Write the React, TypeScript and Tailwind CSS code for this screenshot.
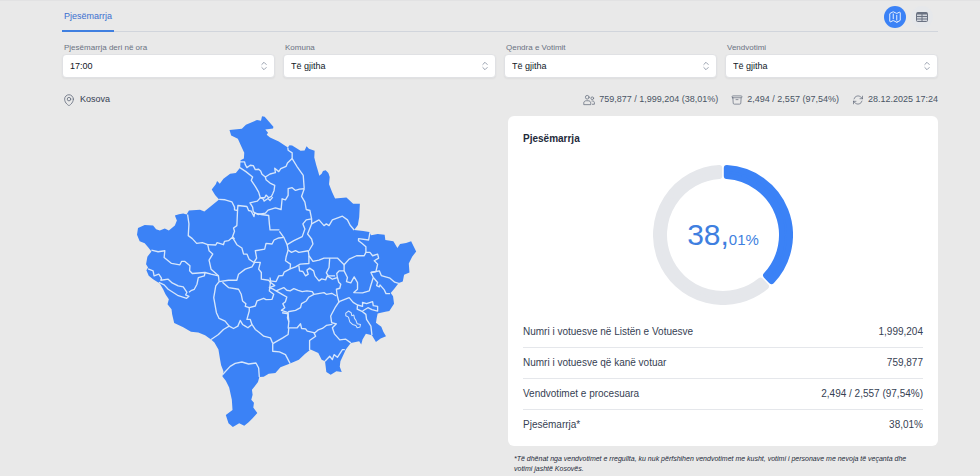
import { useState } from "react";
import type { ReactNode } from "react";
import clsx from "clsx";
import {
  HiOutlineArchiveBox,
  HiOutlineArrowPath,
  HiOutlineMap,
  HiOutlineMapPin,
} from "react-icons/hi2";

const OUTLINE =
  "303,60 340,56 352,44 385,30 397,32 400,19 408,20 434,50 433,55 410,58 418,68 414,74 424,82 450,94 477,112 482,105 490,106 515,122 527,121 533,108 540,116 557,122 556,142 562,165 568,185 571,196 578,190 582,182 590,180 598,188 602,200 600,222 609,245 618,264 652,261 672,280 692,280 690,320 686,343 675,358 702,361 720,364 726,374 745,370 766,372 768,388 792,392 804,412 812,400 830,397 845,392 860,422 848,438 838,458 840,485 824,492 820,512 808,516 796,532 784,546 791,556 794,578 780,600 768,602 745,607 742,622 740,635 756,647 762,662 770,675 754,682 740,692 728,672 710,668 700,685 696,700 690,690 665,695 650,715 644,728 634,750 632,766 638,782 622,780 605,790 592,782 588,750 578,745 568,725 545,715 528,728 510,745 482,757 455,768 440,785 420,787 405,796 392,797 388,812 370,835 372,850 368,865 376,874 374,888 386,904 372,920 360,932 347,942 332,935 313,946 300,935 292,910 312,895 310,865 302,828 292,808 282,795 285,780 278,762 275,745 270,715 258,694 248,685 230,672 210,664 188,662 165,648 138,636 132,610 130,595 118,580 122,565 112,550 105,535 95,518 75,505 62,495 55,478 60,470 54,460 58,438 70,422 62,412 50,398 35,392 27,372 30,352 50,343 75,345 84,356 95,360 110,354 122,360 140,345 146,330 140,315 152,311 165,309 175,312 182,300 215,298 228,303 250,285 272,267 260,254 250,237 262,222 266,212 274,220 285,205 305,190 322,188 335,172 336,150 346,145 347,128 338,108 328,86 308,76";

const BORDERS = [
  "334,155 348,155 350,163 355,172 365,165 374,166 380,178 390,177 396,182 400,192 410,200 424,191 440,187 438,174 450,184 456,175 472,168 476,158 490,145",
  "477,112 478,120 490,128 490,145 504,168 523,195 526,235",
  "334,172 352,184 372,200 368,210 380,228 390,245 395,262 408,262 412,254 420,262 428,258 432,250 436,240 438,225 424,218 412,208 410,200",
  "396,262 404,266 406,272 418,264 424,270 432,260",
  "272,267 290,268 310,274 318,290 318,298 327,300 325,345 315,352 318,362 312,378 318,385",
  "327,300 328,285 355,288 360,300 368,302 376,318 378,308 398,312 420,315 422,340 424,358 452,358",
  "395,262 386,272 364,277 372,290 374,304 388,312 410,308 418,299 440,292 457,297 460,265 470,268 478,255 478,235 490,232 500,240 512,236 526,235",
  "526,235 518,258 528,275 532,297 543,300 548,325 548,340 536,370 548,385 552,400 540,420",
  "548,340 570,328 585,345 592,340 600,345 610,328 640,317 655,328 663,344 675,358",
  "548,325 532,328 522,340 528,355 520,378 495,390 475,402 465,380 452,362",
  "475,402 478,418 488,425 500,420 510,425 538,420 540,435 552,452 570,448 585,442 602,442 625,442 645,462 660,445 682,435 705,435 710,425 710,408 698,398 688,390 688,384 718,388 722,366",
  "478,418 472,438 470,450 485,460 484,474 500,468 514,460 540,458 540,435",
  "484,474 466,484 462,494 450,495 442,512 424,510",
  "510,465 512,480 522,482 530,495 538,490 534,478 542,472 554,480 558,495 570,510 578,504 590,507 595,495 610,505 625,500 623,488 630,480 645,480 645,462",
  "602,442 600,470 592,486 598,495 618,495",
  "625,500 629,514 635,520 632,532 622,535 624,552 630,575",
  "645,480 655,500 652,512 665,516 675,498 685,515 685,535 674,545 700,546 720,540 724,526 732,500 725,485 740,482 745,460 735,450 748,442 745,430 730,435 722,425 710,425",
  "725,485 750,480 756,494 782,502 796,514 810,518",
  "732,500 745,515 742,524 750,528 752,522 765,537 770,548 782,548",
  "442,540 465,530 474,538 484,540 495,533 508,538 520,542 534,540 550,542 555,550 585,545 592,550 608,547 622,555",
  "442,540 460,550 474,558 470,572 462,578 468,590 458,598 478,605 476,620 480,632",
  "478,602 500,598 515,590 518,578 532,570 540,558 555,550",
  "630,572 618,590 610,605 605,615 608,636",
  "630,572 645,566 660,560 672,574 685,582 684,594 700,602 710,610 712,625 725,645 728,672",
  "685,582 700,586 700,574 712,578 730,572 732,584 745,586 745,600 728,596 716,590 700,600",
  "608,635 622,638 610,650 616,668 632,686 650,684 665,695",
  "610,640 592,643 580,652 568,656 558,665 535,660 530,653 518,652 515,638 505,650 480,650 478,670 462,680 432,697",
  "555,665 560,675 542,688 542,717",
  "588,750 602,735 610,745 615,730 625,738 640,715 647,715",
  "460,605 478,608 480,632 478,652",
  "432,697 432,720 452,722 470,730 484,757",
  "432,697 425,680 405,675 392,664 380,655 370,640 358,650 350,645 342,640 335,628 328,645 315,652 302,645 285,655 270,670 248,685",
  "302,645 290,630 272,622 264,605 256,560 262,525 272,512",
  "370,640 365,625 355,625 362,600 362,590",
  "282,790 305,765 320,756 340,752 360,758 382,755 390,770 392,797",
  "178,312 182,340 180,375 192,384 205,398 222,396 238,402 242,420 253,430 242,448 248,475 260,486 270,495 272,512",
  "238,402 262,403 266,396 285,402 288,392 300,390 312,380 325,402 340,412 345,430 355,430 362,446 376,455",
  "70,418 90,423 110,420 108,440 130,458 155,462 160,452 170,452 185,465 184,480 192,488 230,485 248,490 270,495",
  "230,485 228,495 210,500 206,520 198,535 190,538 182,544",
  "60,474 75,480 78,495 92,490 100,502 98,508 120,505 132,516 150,525 165,528 176,544 172,552 182,556 175,562 148,553 120,535 108,522 92,514",
  "272,512 300,508 325,508 330,490 350,475 370,468 378,455 395,455 390,475 398,485 398,505 420,508 425,515",
  "282,514 300,530 330,535 338,550 342,570 352,578 350,586 362,590 380,585 385,570 405,562 412,566 430,565 435,550 422,540 425,515",
  "376,455 384,442 380,420 408,415 412,398 430,400 436,388 450,382 465,380",
  "424,500 426,515 438,524 422,530 432,534 442,540",
];

const ENCLAVE =
  "650,606 658,600 666,605 668,614 674,612 676,622 680,627 684,638 694,640 692,648 684,650 680,643 670,640 662,632 658,618 650,614";

const FILTERS = [
  { id: "hour", label: "Pjesëmarrja deri në ora", value: "17:00" },
  { id: "municipality", label: "Komuna", value: "Të gjitha" },
  { id: "center", label: "Qendra e Votimit", value: "Të gjitha" },
  { id: "station", label: "Vendvotimi", value: "Të gjitha" },
];

const ROWS = [
  ["Numri i votuesve në Listën e Votuesve", "1,999,204"],
  ["Numri i votuesve që kanë votuar", "759,877"],
  ["Vendvotimet e procesuara", "2,494 / 2,557 (97,54%)"],
  ["Pjesëmarrja*", "38,01%"],
];

function UsersIcon() {
  return (
    <svg
      viewBox="0 0 24 24"
      className="size-3 fill-none stroke-gray-500"
      strokeWidth="1.6"
      strokeLinecap="round"
      strokeLinejoin="round"
    >
      <circle cx="8.5" cy="6.5" r="3.7" />
      <path d="M1.5 20.5v-2.2c0-3 2.200-4.800 5-4.800h4c2.800 0 5 1.800 5 4.800v2.200z" />
      <circle cx="18.500" cy="8.500" r="2.700" />
      <path d="M18 14h1.200c2.200 0 3.600 1.500 3.600 3.600v2.900h-4" />
    </svg>
  );
}

function TableIcon() {
  return (
    <svg viewBox="0 0 14 14" className="size-3.5 fill-none stroke-gray-500">
      <rect x="1.500" y="2.500" width="11" height="9" rx="1" className="fill-gray-300" />
      <path d="M2 3.500h10" strokeWidth="2" />
      <path d="M1.500 6.500h11M1.500 9h11M7 3v8.500" />
    </svg>
  );
}

function Filter({ id, label, value }: { id: string; label: string; value: string }) {
  return (
    <div className="flex flex-col gap-px">
      <label htmlFor={id} className="px-0.5 text-[8px] leading-[10px] text-gray-500">
        {label}
      </label>
      <div className="relative">
        <select
          id={id}
          className="block h-6 w-full appearance-none rounded border border-[#e0e1e4] bg-white pt-px pr-6 pl-[7px] text-[9px] text-gray-900 shadow-xs"
        >
          <option>{value}</option>
        </select>
        <svg
          viewBox="0 0 8 10"
          className="pointer-events-none absolute top-[7px] right-[7px] h-2.5 w-2 fill-none stroke-gray-400"
          strokeLinecap="round"
          strokeLinejoin="round"
        >
          <path d="M1.8 3.5 4 1.3l2.2 2.2M1.8 6.500 4 8.700l2.200-2.200" />
        </svg>
      </div>
    </div>
  );
}

function Info({ icon, children }: { icon: ReactNode; children: string }) {
  return (
    <div className="flex items-center gap-1">
      {icon}
      <span>{children}</span>
    </div>
  );
}

function KosovoMap() {
  return (
    <svg
      viewBox="27 18 834 930"
      className="mx-auto w-[65%]"
      strokeLinejoin="round"
      role="img"
      aria-label="Kosova"
    >
      <polygon points={OUTLINE} className="fill-[#3b82f6]" />
      <g className="fill-none stroke-[#d6e6fb]" strokeWidth="4">
        {BORDERS.map((points) => (
          <polyline key={points} points={points} />
        ))}
        <polygon points={ENCLAVE} strokeWidth="3" />
      </g>
    </svg>
  );
}

// Ring segment between two angles (degrees from the top), corners rounded by the stroke
function segment(from: number, to: number) {
  const outer = 67;
  const inner = 59;
  const inset = 3.8;
  const point = (r: number, deg: number, sign: number) => {
    const a = (deg * Math.PI) / 180 + (sign * inset) / r;
    return `${(70 + r * Math.sin(a)).toFixed(2)} ${(70 - r * Math.cos(a)).toFixed(2)}`;
  };
  const large = to - from > 180 ? 1 : 0;
  return `M${point(outer, from, 1)}A${outer} ${outer} 0 ${large} 1 ${point(outer, to, -1)}L${point(inner, to, -1)}A${inner} ${inner} 0 ${large} 0 ${point(inner, from, 1)}Z`;
}

function Donut({ percent }: { percent: number }) {
  const end = percent * 3.6;
  const [whole, rest] = percent.toFixed(2).split(".");

  return (
    <div className="relative mx-auto size-[140px]">
      <svg viewBox="0 0 140 140" className="size-full" strokeWidth="6" strokeLinejoin="round">
        <path d={segment(end, 360)} className="fill-gray-200 stroke-gray-200" />
        <path d={segment(0, end)} className="fill-[#3b82f6] stroke-[#3b82f6]" />
      </svg>
      <p className="absolute inset-0 flex items-center justify-center pb-0.5 text-[#3f7fe0]">
        <span>
          <span className="text-[30px]">{whole},</span>
          <span className="text-[15px]">{rest}%</span>
        </span>
      </p>
    </div>
  );
}

export default function App() {
  const [view, setView] = useState<"map" | "table">("map");

  return (
    <div className="min-h-screen border-t border-[#e2e2e3] bg-[#e9e9e9] pr-[42px] pl-[62px] font-['Liberation_Sans',Arial,sans-serif] text-gray-700">
      <header className="flex h-[31px] items-stretch justify-between border-b border-gray-300">
        <nav className="-mb-px flex">
          <a
            href="#pjesemarrja"
            className="flex items-center border-b-2 border-[#3f7fe0] px-0.5 pt-0.5 text-[9px] text-[#3b6fd0]"
          >
            Pjesëmarrja
          </a>
        </nav>
        <div className="flex items-center gap-[5px] pt-0.5 pr-[5px]">
          {[
            { value: "map", label: "Harta", icon: <HiOutlineMap className="size-3.5" /> },
            { value: "table", label: "Tabela", icon: <TableIcon /> },
          ].map(({ value, label, icon }) => (
            <button
              key={value}
              type="button"
              aria-label={label}
              onClick={() => setView(value as "map" | "table")}
              className={clsx(
                "flex size-[22px] items-center justify-center rounded-full",
                view === value ? "bg-[#3b82f6] text-white" : "bg-[#e6e8eb] text-gray-500"
              )}
            >
              {icon}
            </button>
          ))}
        </div>
      </header>

      <form className="grid grid-cols-4 gap-2 pt-[11px]">
        {FILTERS.map((filter) => (
          <Filter key={filter.id} {...filter} />
        ))}
      </form>

      <div className="flex h-[38px] items-center justify-between pt-1.5 text-[9px]">
        <Info icon={<HiOutlineMapPin className="size-3.5 text-gray-500" />}>Kosova</Info>
        <div className="flex gap-[13px] text-gray-600">
          <Info icon={<UsersIcon />}>759,877 / 1,999,204 (38,01%)</Info>
          <Info icon={<HiOutlineArchiveBox className="size-3 text-gray-500" />}>
            2,494 / 2,557 (97,54%)
          </Info>
          <Info icon={<HiOutlineArrowPath className="size-3 text-gray-500" />}>
            28.12.2025 17:24
          </Info>
        </div>
      </div>

      <main className="grid grid-cols-2 items-start gap-4">
        <KosovoMap />
        <div>
          <section className="rounded-md bg-white px-[15px] pt-4 pb-1.5">
            <h2 className="mb-5 pt-px text-[10px] leading-3 font-bold text-gray-800">
              Pjesëmarrja
            </h2>
            <Donut percent={38.01} />
            <table className="mt-[11px] w-full text-[10px]">
              <tbody className="divide-y divide-gray-200">
                {ROWS.map(([label, value]) => (
                  <tr key={label} className="h-[31px]">
                    <th scope="row" className="p-0 text-left font-normal">
                      {label}
                    </th>
                    <td className="p-0 text-right">{value}</td>
                  </tr>
                ))}
              </tbody>
            </table>
          </section>
          <p className="mt-2 px-1.5 text-[7px] leading-[10px] text-gray-800 italic">
            *Të dhënat nga vendvotimet e rregullta, ku nuk përfshihen vendvotimet me kusht, votimi
            i personave me nevoja të veçanta dhe
            <br />
            votimi jashtë Kosovës.
          </p>
        </div>
      </main>
    </div>
  );
}
